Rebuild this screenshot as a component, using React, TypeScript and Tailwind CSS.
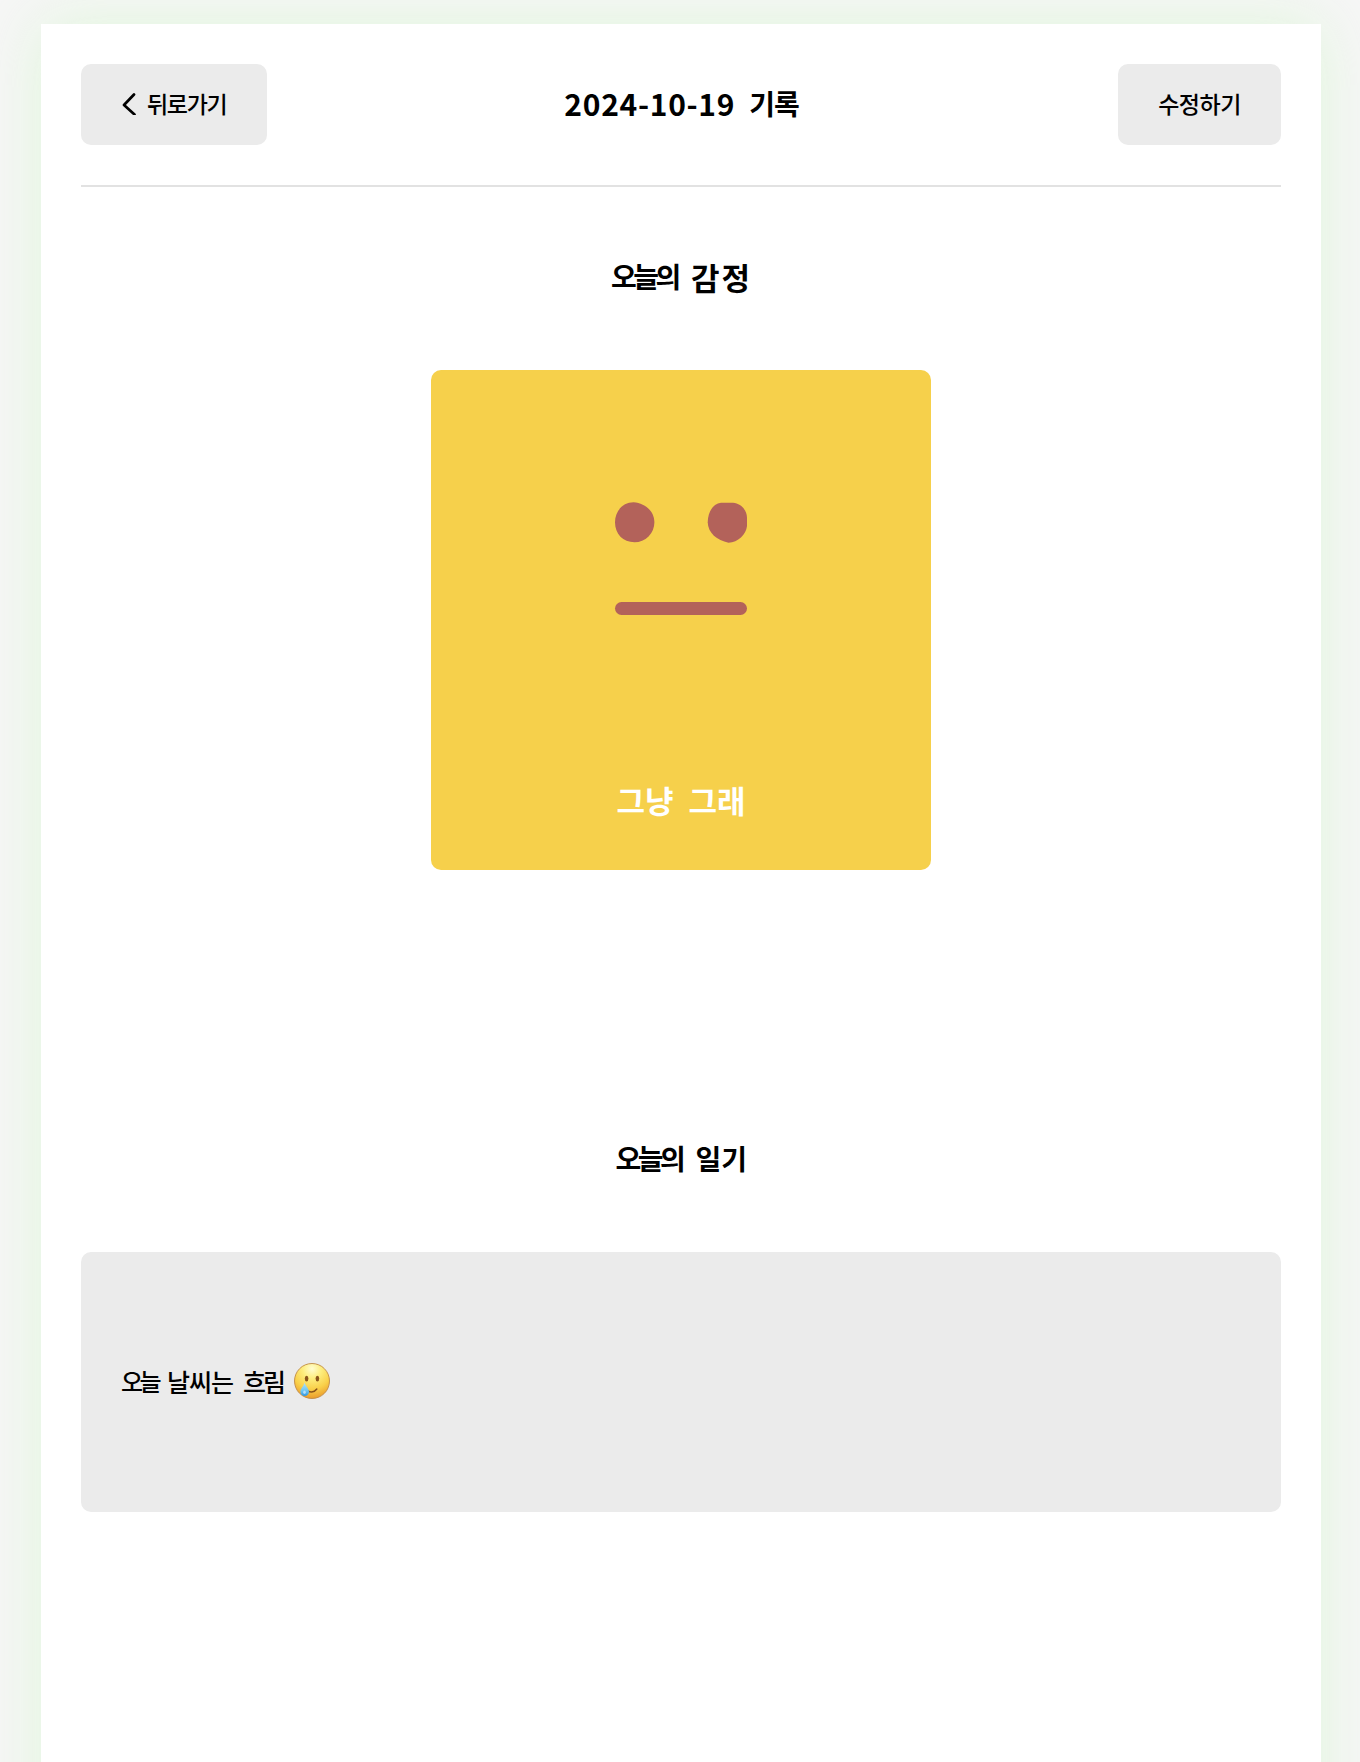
import React from "react";

function TearEmoji() {
  return (
    <svg viewBox="0 0 36 36" className="mb-[2px] h-9 w-9" role="img" aria-label="smiling face with tear">
      <defs>
        <radialGradient id="face" cx="0.5" cy="0.15" r="0.88">
          <stop offset="0" stopColor="#fffdd0" />
          <stop offset="0.3" stopColor="#fdee80" />
          <stop offset="0.65" stopColor="#f9d04a" />
          <stop offset="1" stopColor="#e99628" />
        </radialGradient>
        <linearGradient id="tear" x1="0" y1="0" x2="0" y2="1">
          <stop offset="0" stopColor="#b5e2f5" />
          <stop offset="0.6" stopColor="#6fc6f4" />
          <stop offset="1" stopColor="#2f95e0" />
        </linearGradient>
      </defs>
      <circle cx="18" cy="18" r="17.5" fill="url(#face)" stroke="#c08a45" strokeWidth="0.9" />
      <ellipse cx="12.6" cy="15.6" rx="1.8" ry="2.8" fill="#8a551a" />
      <ellipse cx="23.4" cy="15.6" rx="1.8" ry="2.8" fill="#8a551a" />
      <path d="M13.5 27.6 Q19 31 22.8 26" fill="none" stroke="#86501a" strokeWidth="1.5" strokeLinecap="round" />
      <path d="M10.6 19.4 C11.4 23 15 25.6 15 28.8 A4.3 4.3 0 0 1 6.4 28.8 C6.4 25.6 9.8 23 10.6 19.4Z" fill="url(#tear)" />
      <ellipse cx="10.5" cy="29.2" rx="1.3" ry="1.8" fill="#d5efff" opacity="0.7" />
    </svg>
  );
}

function NeutralFace() {
  return (
    <svg viewBox="0 0 134 116" className="h-[116px] w-[134px]" aria-hidden="true" fill="#b3625a">
      <path d="M19.500 1.200C31 2 40.400 10 40.400 21.300A20 20 0 0 1 20.500 41.300C9 41.300 1 33 1 21.300 1 10 9 1.200 19.500 1.200Z" />
      <path d="M107 1.700H119C127 2.500 133 9 133 17V25C132 34 124 41.200 114.500 41.700 103 39.500 94 32 93.700 21.300 94 10.500 99 2.700 107 1.700Z" />
      <rect x="1" y="101" width="132" height="13" rx="6.500" />
    </svg>
  );
}

function SectionTitle({ children }: { children: React.ReactNode }) {
  return (
    <h2 className="flex h-[60px] items-center justify-center pb-1 text-[28px] leading-none font-bold whitespace-nowrap">
      {children}
    </h2>
  );
}

export default function App() {
  return (
    <div className="h-[1762px] overflow-hidden bg-[#f6f6f6] pt-6 pl-[41px] font-['Noto_Sans_CJK_KR',sans-serif] text-black">
      <main className="h-[1900px] w-[1280px] bg-white px-10 shadow-[0_0_58px_rgba(200,248,190,0.48)]">
        <header className="flex h-[163px] items-center justify-between border-b-2 border-[#e2e2e2]">
          <button className="flex h-[81px] w-[186px] items-center rounded-[10px] bg-[#ebebeb] pb-[3px] pl-[41px] text-[23px] leading-none font-medium">
            <svg viewBox="0 0 14 24" className="mr-[11px] h-6 w-[14px]" fill="none" stroke="black" strokeWidth="2.7" strokeLinecap="round" strokeLinejoin="round" aria-hidden="true">
              <path d="M12 3.500 L2 14 L12.500 23.500" />
            </svg>
            <span className="tracking-[-1.300px]">뒤로가기</span>
          </button>
          <h1 className="mr-[22px] flex items-center gap-[14px] pb-1 leading-none font-bold">
            <span className="text-[30px] tracking-[0.7px]">2024-10-19</span>
            <span className="text-[28px] tracking-[-1px]">기록</span>
          </h1>
          <button className="h-[81px] w-[163px] rounded-[10px] bg-[#ebebeb] pb-[3px] text-[23px] leading-none font-medium tracking-[-0.5px]">
            수정하기
          </button>
        </header>

        <section className="pt-[61px]">
          <SectionTitle>
            <span className="w-[80px] text-[28px] tracking-[-3.500px]">오늘의</span>
            <span className="w-[60px] text-[31px] tracking-[2px]">감정</span>
          </SectionTitle>
          <div className="mx-auto mt-[62px] flex h-[500px] w-[500px] flex-col items-center rounded-[10px] bg-[#f6d04b] pt-[131px]">
            <NeutralFace />
            <div className="mt-[167px] flex gap-[15px] text-[31px] leading-none font-bold text-white">
              <span>그냥</span>
              <span>그래</span>
            </div>
          </div>
        </section>

        <section className="pt-[260px]">
          <SectionTitle>
            <span className="w-[80px] text-[28px] tracking-[-3.500px]">오늘의</span>
            <span className="w-[51px]">일기</span>
          </SectionTitle>
          <div className="mt-[62px] flex h-[260px] items-center rounded-[10px] bg-[#ebebeb] pl-10 text-[25px] leading-none font-medium whitespace-nowrap">
            <span className="w-[46px] pb-[2px] text-[24px] tracking-[-3.500px]">오늘</span>
            <span className="w-[76px] pb-[2px] tracking-[-1px]">날씨는</span>
            <span className="w-[51px] pb-[2px] tracking-[-3px]">흐림</span>
            <TearEmoji />
          </div>
        </section>
      </main>
    </div>
  );
}
